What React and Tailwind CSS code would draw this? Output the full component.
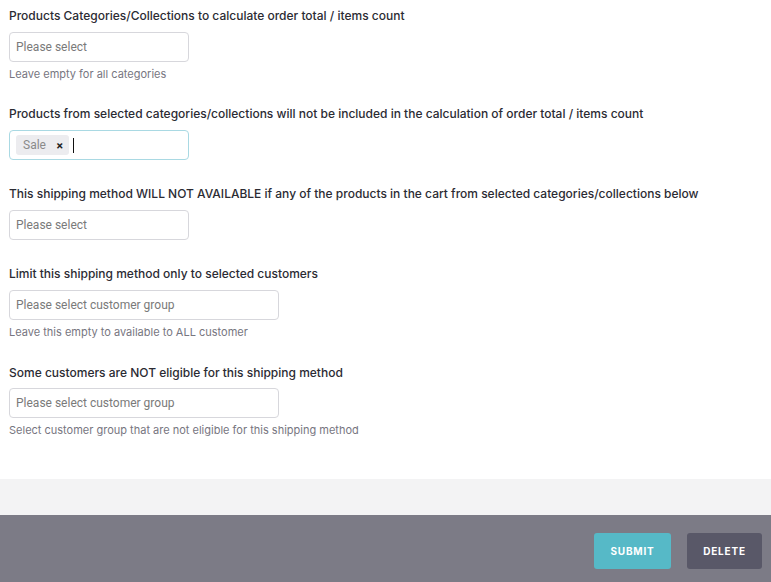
export default function App() {
  const label = "text-[12px] leading-[16px] font-medium text-[#2b2b33]";
  const help = "text-[11px] leading-[14px] text-[#77767f] mt-[5px]";
  const input =
    "h-[30px] border border-[#d7d7dc] rounded-[4px] bg-white flex items-center px-[6px] text-[12px] text-[#7a7a7a]";
  return (
    <div className="w-[771px] h-[582px] flex flex-col bg-white" style={{ fontFamily: "Inter, 'Noto Sans', sans-serif" }}>
      <div className="flex-1 px-[9px] pt-[8px]">
        <div className="flex flex-col">
          <div className={label}>Products Categories/Collections to calculate order total / items count</div>
          <div className={`${input} w-[180px] mt-[8px]`} style={{ fontFamily: "Roboto, sans-serif" }}>Please select</div>
          <div className={help}>Leave empty for all categories</div>
        </div>
        <div className="flex flex-col mt-[25px]">
          <div className={label}>Products from selected categories/collections will not be included in the calculation of order total / items count</div>
          <div className="h-[30px] w-[180px] mt-[8px] border border-[#a9d9e3] rounded-[4px] bg-white flex items-center pl-[6px] pr-[5px] box-border">
            <div className="h-[20px] bg-[#ececef] rounded-[3px] flex items-center pl-[7px] pr-[6px] gap-[10px]">
              <span className="text-[12px] leading-[20px] text-[#8a8a8a]" style={{ fontFamily: "Roboto, sans-serif" }}>Sale</span>
              <span className="text-[11px] leading-[20px] font-bold text-[#222]">×</span>
            </div>
            <div className="w-px h-[15px] bg-[#111] ml-[4px]" />
          </div>
        </div>
        <div className="flex flex-col mt-[26px]">
          <div className={label}>This shipping method WILL NOT AVAILABLE if any of the products in the cart from selected categories/collections below</div>
          <div className={`${input} w-[180px] mt-[8px]`} style={{ fontFamily: "Roboto, sans-serif" }}>Please select</div>
        </div>
        <div className="flex flex-col mt-[26px]">
          <div className={label}>Limit this shipping method only to selected customers</div>
          <div className={`${input} w-[270px] mt-[8px]`} style={{ fontFamily: "Roboto, sans-serif" }}>Please select customer group</div>
          <div className={help}>Leave this empty to available to ALL customer</div>
        </div>
        <div className="flex flex-col mt-[26px]">
          <div className={label}>Some customers are NOT eligible for this shipping method</div>
          <div className={`${input} w-[270px] mt-[7px]`} style={{ fontFamily: "Roboto, sans-serif" }}>Please select customer group</div>
          <div className={help}>Select customer group that are not eligible for this shipping method</div>
        </div>
      </div>
      <div className="h-[36px] bg-[#f3f3f4]" />
      <div className="h-[67px] bg-[#7c7b86] flex items-start justify-end pt-[18px] pr-[9px] gap-[16px]">
        <button className="w-[77px] h-[36px] bg-[#56b9c7] rounded-[3px] text-white text-[10px] font-bold tracking-[0.8px]">SUBMIT</button>
        <button className="w-[75px] h-[36px] bg-[#595868] rounded-[3px] text-white text-[10px] font-bold tracking-[0.8px]">DELETE</button>
      </div>
    </div>
  );
}
